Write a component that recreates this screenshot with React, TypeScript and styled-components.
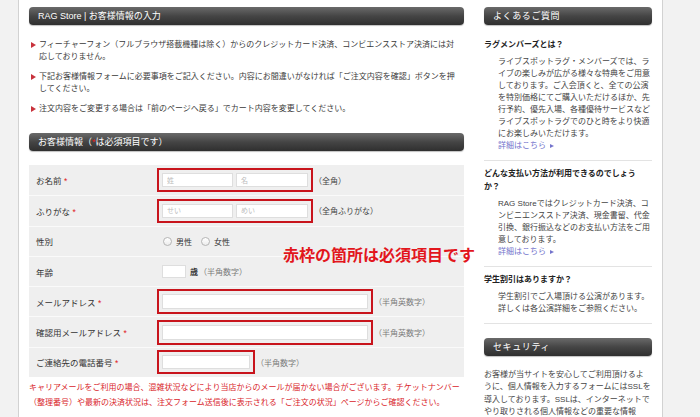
import React from 'react';
import styled, { createGlobalStyle } from 'styled-components';

const GlobalStyle = createGlobalStyle`
  html, body {
    margin: 0;
    padding: 0;
    background: #f2f2f2;
  }
  body {
    font-family: "Liberation Sans", "Noto Sans CJK JP", sans-serif;
    color: #3a3a3a;
  }
`;

const Page = styled.div`
  box-sizing: border-box;
  margin-left: 18px;
  width: 645px;
  min-height: 417px;
  padding: 7px 10px 0;
  display: flex;
  gap: 20px;
  background: #fff;
  border-left: 1px solid #d2d2d2;
  border-right: 1px solid #d2d2d2;
`;

const Main = styled.main`
  flex: none;
  width: 435px;
`;

const Side = styled.aside`
  flex: none;
  width: 168px;
`;

const BarHeading = styled.h2<{ $spaced?: boolean }>`
  margin: 0;
  height: 18px;
  line-height: 18px;
  padding-left: 9px;
  border-radius: 4px;
  background: linear-gradient(#6a6a6a, #454545 50%, #2f2f2f);
  box-shadow: 0 1px 1px rgba(0, 0, 0, 0.25);
  color: #fff;
  font-size: 9px;
  font-weight: normal;
  letter-spacing: ${(p) => (p.$spaced ? '0.6px' : '0')};
  white-space: nowrap;
`;

const Star = styled.span`
  color: #e02020;
`;

/* notices */
const NoticeList = styled.ul`
  list-style: none;
  margin: 14px 0 0;
  padding: 0;
`;

const NoticeItem = styled.li`
  display: flex;
  font-size: 8px;
  line-height: 12px;
  white-space: nowrap;

  & + & {
    margin-top: 8px;
  }

  &::before {
    content: "";
    flex: none;
    width: 0;
    height: 0;
    margin: 3px 3px 0 2px;
    border-left: 5px solid #c8323c;
    border-top: 3px solid transparent;
    border-bottom: 3px solid transparent;
  }
`;

const SecondHeading = styled(BarHeading)`
  margin-top: 18px;
`;

/* form */
const FormTable = styled.div`
  position: relative;
  margin-top: 14px;
  background: #efefef;
`;

const FormRow = styled.div`
  box-sizing: border-box;
  display: flex;
  align-items: center;
  height: 30.3px;

  & + & {
    border-top: 1px solid #fafafa;
  }
`;

const FieldLabel = styled.div`
  flex: none;
  box-sizing: border-box;
  width: 128px;
  padding-left: 7px;
  font-size: 8.5px;
  color: #333;
  white-space: nowrap;
`;

const FieldValue = styled.div<{ $inset?: boolean }>`
  display: flex;
  align-items: center;
  padding-left: ${(p) => (p.$inset ? '5px' : '0')};
  font-size: 8px;
  white-space: nowrap;
`;

const RequiredBox = styled.div`
  display: flex;
  gap: 3px;
  padding: 3px;
  border: 2px solid #c8141c;
`;

const TextInput = styled.input<{ $w: number; $h?: number }>`
  box-sizing: border-box;
  width: ${(p) => p.$w}px;
  height: ${(p) => p.$h ?? 14}px;
  margin: 0;
  padding: 0 4px;
  border: 1px solid #dedede;
  background: #fff;
  font-family: "Liberation Sans", "Noto Sans CJK JP", sans-serif;
  font-size: 7px;
  outline: none;

  &::placeholder {
    color: #bcbcbc;
  }
`;

const Hint = styled.span<{ $muted?: boolean }>`
  margin-left: 1px;
  color: ${(p) => (p.$muted ? '#7a7a7a' : '#444')};
`;

const Unit = styled.span`
  margin-left: 4px;
  font-weight: bold;
  color: #333;
`;

const Radio = styled.input`
  appearance: none;
  box-sizing: border-box;
  width: 9px;
  height: 9px;
  margin: 0 4px 0 1px;
  border: 1px solid #b5b5b5;
  border-radius: 50%;
  background: linear-gradient(#fff, #ececec);
`;

const RadioText = styled.span`
  margin-right: 8px;
  color: #333;
`;

const Annotation = styled.div`
  position: absolute;
  left: 254px;
  top: 80px;
  font-family: "Noto Sans CJK JP", sans-serif;
  font-size: 16px;
  line-height: 18px;
  font-weight: 700;
  color: #e2161c;
  white-space: nowrap;
`;

const Caution = styled.p`
  margin: 3px 0 0;
  font-size: 8px;
  line-height: 15px;
  color: #d9252b;
  white-space: nowrap;
`;

/* sidebar */
const FaqList = styled.div`
  margin-top: 13px;
`;

const FaqItem = styled.section`
  padding-bottom: 8px;
  border-bottom: 1px solid #e3e3e3;

  & + & {
    margin-top: 6px;
  }
`;

const FaqQuestion = styled.h3`
  margin: 0;
  font-size: 8px;
  line-height: 13px;
  font-weight: bold;
  color: #222;
  white-space: nowrap;
`;

const FaqAnswer = styled.p`
  margin: 5px 0 0;
  padding-left: 14px;
  font-size: 8px;
  line-height: 12px;
  color: #444;
  white-space: nowrap;
`;

const MoreLink = styled.a`
  display: inline-flex;
  align-items: center;
  color: #7474cc;
  text-decoration: none;

  &::after {
    content: "";
    width: 0;
    height: 0;
    margin-left: 4px;
    border-left: 4px solid #7474cc;
    border-top: 2.5px solid transparent;
    border-bottom: 2.5px solid transparent;
  }
`;

const SecurityHeading = styled(BarHeading)`
  margin-top: 14px;
`;

const SecurityText = styled.p`
  margin: 13px 0 0;
  font-size: 8px;
  line-height: 12.3px;
  color: #444;
  white-space: nowrap;
`;

const App = () => {
  return (
    <>
      <GlobalStyle />
      <Page>
        <Main>
          <BarHeading>RAG Store | お客様情報の入力</BarHeading>
          <NoticeList>
            <NoticeItem>
              <span>
                フィーチャーフォン（フルブラウザ搭載機種は除く）からのクレジットカード決済、コンビエンスストア決済には対
                <br />
                応しておりません。
              </span>
            </NoticeItem>
            <NoticeItem>
              <span>
                下記お客様情報フォームに必要事項をご記入ください。内容にお間違いがなければ「ご注文内容を確認」ボタンを押
                <br />
                してください。
              </span>
            </NoticeItem>
            <NoticeItem>
              <span>注文内容をご変更する場合は「前のページへ戻る」でカート内容を変更してください。</span>
            </NoticeItem>
          </NoticeList>

          <SecondHeading>
            お客様情報（<Star>*</Star>は必須項目です）
          </SecondHeading>

          <FormTable>
            <FormRow>
              <FieldLabel>
                お名前 <Star>*</Star>
              </FieldLabel>
              <FieldValue>
                <RequiredBox>
                  <TextInput $w={71} placeholder="姓" />
                  <TextInput $w={72} placeholder="名" />
                </RequiredBox>
                <Hint>（全角）</Hint>
              </FieldValue>
            </FormRow>
            <FormRow>
              <FieldLabel>
                ふりがな <Star>*</Star>
              </FieldLabel>
              <FieldValue>
                <RequiredBox>
                  <TextInput $w={71} placeholder="せい" />
                  <TextInput $w={72} placeholder="めい" />
                </RequiredBox>
                <Hint>（全角ふりがな）</Hint>
              </FieldValue>
            </FormRow>
            <FormRow>
              <FieldLabel>性別</FieldLabel>
              <FieldValue $inset>
                <Radio type="radio" name="sex" />
                <RadioText>男性</RadioText>
                <Radio type="radio" name="sex" />
                <RadioText>女性</RadioText>
              </FieldValue>
            </FormRow>
            <FormRow>
              <FieldLabel>年齢</FieldLabel>
              <FieldValue $inset>
                <TextInput $w={24} $h={13} />
                <Unit>歳</Unit>
                <Hint $muted>（半角数字）</Hint>
              </FieldValue>
            </FormRow>
            <FormRow>
              <FieldLabel>
                メールアドレス <Star>*</Star>
              </FieldLabel>
              <FieldValue>
                <RequiredBox>
                  <TextInput $w={206} $h={15} />
                </RequiredBox>
                <Hint $muted>（半角英数字）</Hint>
              </FieldValue>
            </FormRow>
            <FormRow>
              <FieldLabel>
                確認用メールアドレス <Star>*</Star>
              </FieldLabel>
              <FieldValue>
                <RequiredBox>
                  <TextInput $w={206} $h={15} />
                </RequiredBox>
                <Hint $muted>（半角英数字）</Hint>
              </FieldValue>
            </FormRow>
            <FormRow>
              <FieldLabel>
                ご連絡先の電話番号 <Star>*</Star>
              </FieldLabel>
              <FieldValue>
                <RequiredBox>
                  <TextInput $w={88} $h={14} />
                </RequiredBox>
                <Hint $muted>（半角数字）</Hint>
              </FieldValue>
            </FormRow>
            <Annotation>赤枠の箇所は必須項目です</Annotation>
          </FormTable>

          <Caution>
            キャリアメールをご利用の場合、混雑状況などにより当店からのメールが届かない場合がございます。チケットナンバー
            <br />
            （整理番号）や最新の決済状況は、注文フォーム送信後に表示される「ご注文の状況」ページからご確認ください。
          </Caution>
        </Main>

        <Side>
          <BarHeading $spaced>よくあるご質問</BarHeading>
          <FaqList>
            <FaqItem>
              <FaqQuestion>ラグメンバーズとは？</FaqQuestion>
              <FaqAnswer>
                ライブスポットラグ・メンバーズでは、ラ
                <br />
                イブの楽しみが広がる様々な特典をご用意
                <br />
                しております。ご入会頂くと、全ての公演
                <br />
                を特別価格にてご購入いただけるほか、先
                <br />
                行予約、優先入場、各種優待サービスなど
                <br />
                ライブスポットラグでのひと時をより快適
                <br />
                にお楽しみいただけます。
                <br />
                <MoreLink href="#">詳細はこちら</MoreLink>
              </FaqAnswer>
            </FaqItem>
            <FaqItem>
              <FaqQuestion>
                どんな支払い方法が利用できるのでしょう
                <br />
                か？
              </FaqQuestion>
              <FaqAnswer>
                RAG Storeではクレジットカード決済、コ
                <br />
                ンビニエンスストア決済、現金書留、代金
                <br />
                引換、銀行振込などのお支払い方法をご用
                <br />
                意しております。
                <br />
                <MoreLink href="#">詳細はこちら</MoreLink>
              </FaqAnswer>
            </FaqItem>
            <FaqItem>
              <FaqQuestion>学生割引はありますか？</FaqQuestion>
              <FaqAnswer>
                学生割引でご入場頂ける公演があります。
                <br />
                詳しくは各公演詳細をご参照ください。
              </FaqAnswer>
            </FaqItem>
          </FaqList>

          <SecurityHeading $spaced>セキュリティ</SecurityHeading>
          <SecurityText>
            お客様が当サイトを安心してご利用頂けるよ
            <br />
            うに、個人情報を入力するフォームにはSSLを
            <br />
            導入しております。SSLは、インターネットで
            <br />
            やり取りされる個人情報などの重要な情報
          </SecurityText>
        </Side>
      </Page>
    </>
  );
};

export default App;
